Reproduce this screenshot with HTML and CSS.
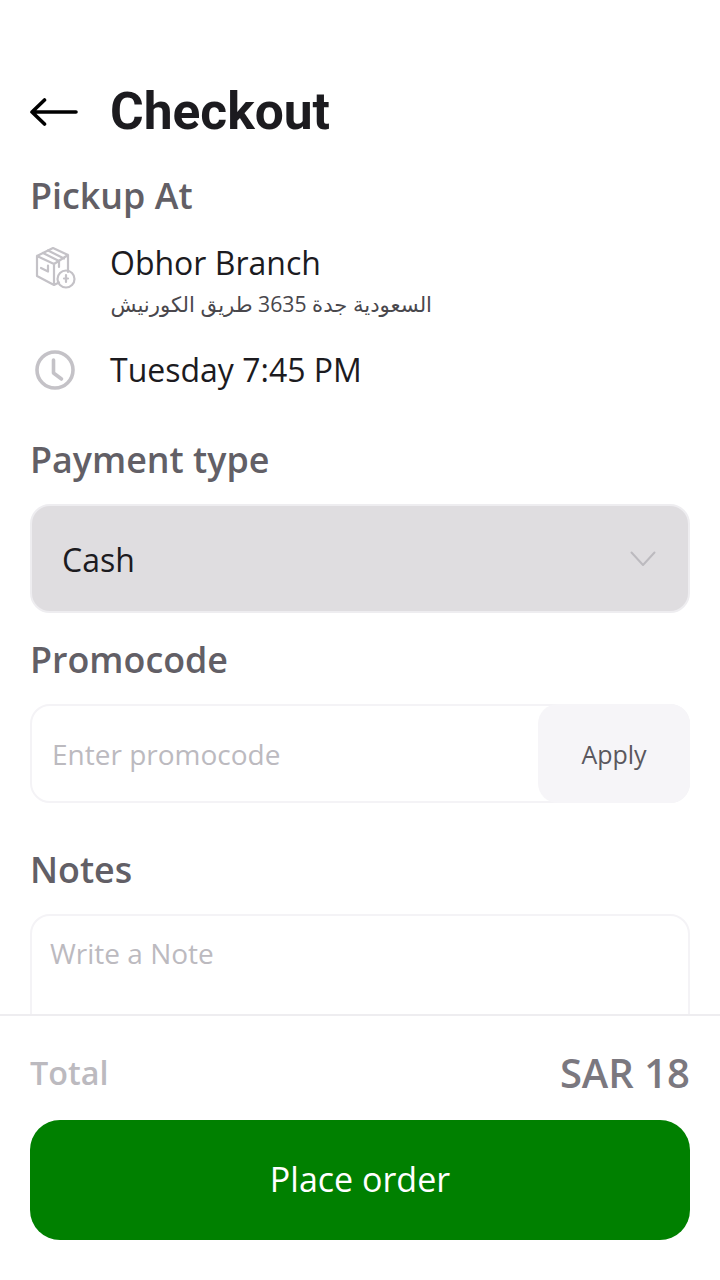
FILE: index.html
```html
<!DOCTYPE html>
<html lang="en">
<head>
  <meta charset="UTF-8" />
  <meta name="viewport" content="width=device-width, initial-scale=1.0" />
  <title>Checkout</title>
  <link rel="stylesheet" href="styles.css">
</head>
<body>
  <div class="page">
    <div class="content">
      <div class="header">
        <svg class="back-icon" viewBox="0 0 48 28" width="48" height="28" fill="none" stroke="#000" stroke-width="3.6" stroke-linecap="round" stroke-linejoin="round">
          <path d="M46 14H2M14.500 2 2 14l12.500 12"/>
        </svg>
        <h1>Checkout</h1>
      </div>

      <h2 class="section-title pickup-title">Pickup At</h2>
      <div class="info-row branch-row">
        <svg class="info-icon" viewBox="0 0 44 44" width="44" height="44" fill="none" stroke="#c4c2c7" stroke-width="2.200" stroke-linejoin="round" stroke-linecap="round">
          <path d="M4 11 20 3l15 7v17M4 11v20l17 9 5-2.500M4 11l17 8 14-9M21 19v21"/>
          <path d="M10 8l16 8v6M15 5.500l16 8"/>
          <path d="M8 23l7 3.500v-6"/>
          <circle cx="33" cy="34" r="8.500"/>
          <path d="M33 30v7M31 33.500h4"/>
        </svg>
        <div class="branch-text">
          <div class="info-main">Obhor Branch</div>
          <div class="info-sub" dir="rtl">السعودية جدة 3635 طريق الكورنيش</div>
        </div>
      </div>
      <div class="info-row time-row">
        <svg class="info-icon" viewBox="0 0 44 44" width="44" height="44" fill="none" stroke="#c4c2c7" stroke-width="3.600" stroke-linecap="round" stroke-linejoin="round">
          <circle cx="22" cy="22" r="18"/>
          <path d="M20.500 12v13l8 6"/>
        </svg>
        <div class="info-main">Tuesday 7:45 PM</div>
      </div>

      <h2 class="section-title payment-title">Payment type</h2>
      <div class="select-box">
        <span>Cash</span>
        <svg viewBox="0 0 26 16" width="26" height="16" fill="none" stroke="#bcbabf" stroke-width="2" stroke-linecap="round" stroke-linejoin="round">
          <path d="M1.500 1.500 13 14 24.500 1.500"/>
        </svg>
      </div>

      <h2 class="section-title promo-title">Promocode</h2>
      <div class="promo-box">
        <span class="promo-placeholder">Enter promocode</span>
        <button class="apply-btn">Apply</button>
      </div>

      <h2 class="section-title notes-title">Notes</h2>
      <div class="notes-box">Write a Note</div>
    </div>

    <div class="footer">
      <div class="total-row">
        <span class="total-label">Total</span>
        <span class="total-value">SAR 18</span>
      </div>
      <button class="place-btn">Place order</button>
    </div>
  </div>
</body>
</html>
```

FILE: styles.css
```css
* {
  box-sizing: border-box;
}
body {
  margin: 0;
  background: #fff;
  font-family: "Open Sans", "DejaVu Sans", sans-serif;
  color: #1c1b1f;
}
.page {
  width: 720px;
  height: 1280px;
  display: flex;
  flex-direction: column;
  overflow: hidden;
}
.content {
  flex: 1;
  min-height: 0;
  overflow: hidden;
  padding: 81px 30px 0;
}
.header {
  display: flex;
  align-items: center;
  height: 62px;
}
.back-icon {
  width: 48px;
  margin-right: 32px;
}
h1 {
  margin: 0;
  font-family: Roboto, sans-serif;
  font-size: 51.500px;
  font-weight: 700;
  line-height: 62px;
  color: #1c1b1f;
}
.section-title {
  margin: 0;
  font-size: 35.850px;
  font-weight: 600;
  line-height: 46px;
  color: #625f66;
}
.pickup-title {
  margin-top: 30px;
}
.info-row {
  display: flex;
  align-items: center;
}
.info-icon {
  flex-shrink: 0;
  margin-left: 3px;
  margin-right: 33px;
}
.info-main {
  font-size: 32px;
  line-height: 44px;
}
.info-sub {
  margin-top: 5px;
  font-size: 21.200px;
  line-height: 28px;
  color: #49474c;
}
.branch-row {
  margin-top: 22px;
  align-items: flex-start;
}
.branch-row .info-icon {
  margin-top: 4px;
}
.branch-text {
  width: 322px;
}
.time-row {
  margin-top: 30px;
}
.payment-title {
  margin-top: 45px;
}
.select-box {
  height: 109px;
  margin-top: 21px;
  padding: 1px 32px 0 30px;
  display: flex;
  align-items: center;
  justify-content: space-between;
  background: #dfdde0;
  border: 2px solid #eeedf0;
  border-radius: 20px;
  font-size: 32px;
}
.promo-title {
  margin-top: 24px;
}
.promo-box {
  height: 99px;
  margin-top: 21px;
  display: flex;
  align-items: stretch;
  justify-content: space-between;
  border: 2px solid #f4f3f6;
  border-radius: 20px;
}
.promo-placeholder {
  align-self: center;
  padding-left: 20px;
  font-size: 28px;
  color: #bcbabf;
}
.apply-btn {
  width: 152px;
  margin: -2px;
  border: none;
  border-radius: 20px;
  background: #f6f5f8;
  font-family: inherit;
  font-size: 25px;
  color: #5a585e;
}
.notes-title {
  margin-top: 44px;
}
.notes-box {
  height: 180px;
  margin-top: 21px;
  padding: 18px;
  border: 2px solid #f4f3f6;
  border-radius: 20px;
  font-size: 28px;
  line-height: 38px;
  color: #bcbabf;
}
.footer {
  height: 266px;
  flex-shrink: 0;
  padding: 33px 30px 0;
  background: #fff;
  border-top: 2px solid #eeedf0;
}
.total-row {
  display: flex;
  justify-content: space-between;
  align-items: center;
  height: 46px;
}
.total-label {
  font-size: 32.300px;
  font-weight: 600;
  color: #bcbabf;
}
.total-value {
  font-size: 40px;
  font-weight: 600;
  color: #7b787f;
}
.place-btn {
  display: block;
  width: 100%;
  height: 120px;
  margin-top: 25px;
  padding-bottom: 4px;
  border: none;
  border-radius: 30px;
  background: #008000;
  font-family: inherit;
  font-size: 34px;
  color: #fff;
}
```
